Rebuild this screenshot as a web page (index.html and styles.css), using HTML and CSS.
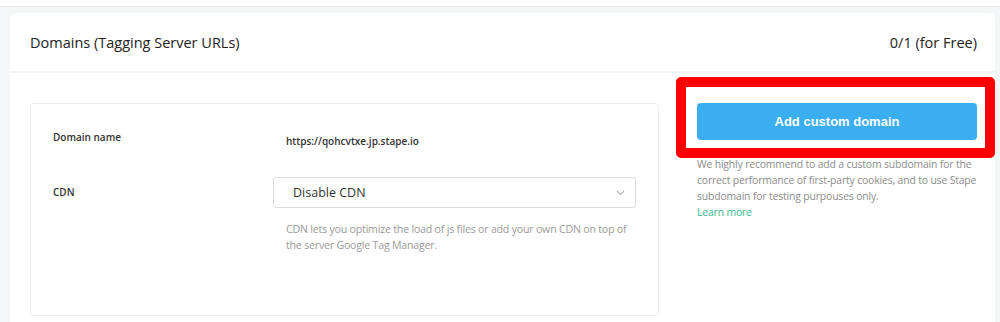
FILE: index.html
```html
<!DOCTYPE html>
<html lang="en">
<head>
  <meta charset="UTF-8">
  <title>Domains</title>
  <link rel="stylesheet" href="styles.css">
</head>
<body>
  <div class="topbar"></div>
  <div class="card">
    <div class="card-header">
      <h2 class="card-title">Domains (Tagging Server URLs)</h2>
      <span class="usage">0/1 (for Free)</span>
    </div>
    <div class="card-body">
      <div class="domain-box">
        <div class="row">
          <span class="row-label">Domain name</span>
          <span class="row-value">https://qohcvtxe.jp.stape.io</span>
        </div>
        <div class="row row-cdn">
          <span class="row-label label-tall">CDN</span>
          <div class="field">
            <div class="select">
              <span>Disable CDN</span>
              <svg class="chevron" width="9" height="6" viewBox="0 0 9 6">
                <polyline points="1,1 4.5,4.5 8,1" fill="none" stroke="#b5b5b5" stroke-width="1.1"/>
              </svg>
            </div>
            <p class="hint">CDN lets you optimize the load of js files or add your own CDN on top of the server Google Tag Manager.</p>
          </div>
        </div>
      </div>
      <div class="side">
        <div class="btn-wrap">
          <button class="btn-primary">Add custom domain</button>
          <!-- highlight frame -->
          <div class="highlight"></div>
        </div>
        <p class="side-text">We highly recommend to add a custom subdomain for the correct performance of first-party cookies, and to use Stape subdomain for testing purpouses only.</p>
        <a href="#" class="learn-more">Learn more</a>
      </div>
    </div>
  </div>
</body>
</html>
```

FILE: styles.css
```css
body {
  margin: 0;
  background-color: #f5f6f8;
  font-family: 'Open Sans', 'Noto Sans', sans-serif;
  color: #333;
  height: 322px;
  overflow: hidden;
}
.topbar {
  height: 6px;
  background-color: #fff;
  border-bottom: 1px solid #e2e4e8;
}
.card {
  margin: 6px 5px 0 10px;
  background-color: #fff;
  border-radius: 6px 6px 0 0;
  height: 320px;
}
.card-header {
  height: 58px;
  padding: 0 18px 0 20px;
  display: flex;
  align-items: center;
  justify-content: space-between;
  border-bottom: 2px solid #f2f3f5;
}
.card-title {
  margin: 0;
  font-size: 14.5px;
  font-weight: 500;
  color: #222;
}
.usage {
  font-size: 14.5px;
  color: #222;
}
.card-body {
  display: flex;
  gap: 38px;
  padding: 30px 18px 0 20px;
}
.domain-box {
  width: 583px;
  height: 186px;
  border: 1px solid #ebecee;
  border-radius: 4px;
  padding: 25px 22px 0 22px;
  flex-shrink: 0;
}
.row {
  display: flex;
}
.row-label {
  width: 220px;
  font-size: 10px;
  font-weight: 600;
  line-height: 16px;
  color: #333;
}
.row-value {
  margin-top: 4px;
  padding-left: 13px;
  font-size: 10px;
  font-weight: 600;
  line-height: 16px;
  color: #333;
}
.row-cdn {
  margin-top: 28px;
}
.label-tall {
  line-height: 31px;
}
.field {
  width: 363px;
}
.select {
  height: 29px;
  border: 1px solid #dcdcdc;
  border-radius: 3px;
  display: flex;
  align-items: center;
  justify-content: space-between;
  padding: 0 10px 0 19px;
  font-size: 12.5px;
  color: #333;
}
.chevron {
  display: block;
}
.hint {
  margin: 13px 0 0;
  padding-left: 13px;
  font-size: 10.6px;
  line-height: 16px;
  letter-spacing: -0.2px;
  color: #9a9a9a;
}
.side {
  width: 280px;
  flex-shrink: 0;
}
.btn-wrap {
  position: relative;
}
.btn-primary {
  display: block;
  width: 100%;
  height: 37px;
  border: none;
  border-radius: 4px;
  background-color: #3baef2;
  color: #fff;
  font-family: 'Liberation Sans', Arial, sans-serif;
  font-size: 13px;
  font-weight: bold;
}
.highlight {
  position: absolute;
  left: -21px;
  right: -18px;
  top: -26px;
  bottom: -18px;
  border: 10px solid #ff0000;
  border-radius: 5px;
}
.side-text {
  margin: 16px 0 0;
  font-size: 10.4px;
  line-height: 16px;
  letter-spacing: -0.15px;
  color: #8c8c8c;
}
.learn-more {
  display: block;
  font-size: 10.4px;
  line-height: 16px;
  letter-spacing: -0.15px;
  color: #3dbb8c;
  text-decoration: none;
}
```
